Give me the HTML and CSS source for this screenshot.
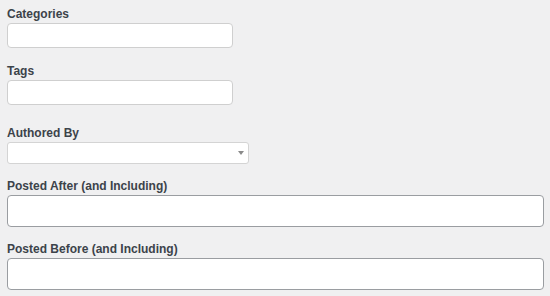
FILE: index.html
```html
<!DOCTYPE html>
<html lang="en">
<head>
    <meta charset="UTF-8">
    <meta name="viewport" content="width=device-width, initial-scale=1.0">
    <title>Post Filters</title>
    <link rel="stylesheet" href="styles.css">
</head>
<body>
    <div class="filters">
        <div class="field field-first">
            <label for="categories">Categories</label>
            <input type="text" id="categories" class="short-input">
        </div>

        <div class="field">
            <label for="tags">Tags</label>
            <input type="text" id="tags" class="short-input">
        </div>

        <div class="field field-author">
            <label for="author">Authored By</label>
            <div class="select-wrap">
                <select id="author">
                    <option value=""></option>
                </select>
                <span class="select-arrow"></span>
            </div>
        </div>

        <div class="field field-date">
            <label for="postedAfter">Posted After (and Including)</label>
            <input type="text" id="postedAfter" class="wide-input">
        </div>

        <div class="field field-date">
            <label for="postedBefore">Posted Before (and Including)</label>
            <input type="text" id="postedBefore" class="wide-input">
        </div>
    </div>
</body>
</html>
```

FILE: styles.css
```css
body {
    margin: 0;
    padding: 0 7px;
    background-color: #f0f0f1;
    font-family: "Liberation Sans", Arial, sans-serif;
    color: #3c434a;
}
.field {
    margin-top: 14px;
}
.field-first {
    margin-top: 5px;
}
.field-author {
    margin-top: 19px;
}
.field-date {
    margin-top: 13px;
}
label {
    display: block;
    font-size: 12px;
    font-weight: bold;
    line-height: 18px;
}
input[type="text"] {
    display: block;
    box-sizing: border-box;
    margin: 0;
    background-color: #fff;
    border-radius: 4px;
}
.short-input {
    width: 226px;
    height: 25px;
    border: 1px solid #cfcfcf;
}
.wide-input {
    width: 537px;
    height: 32px;
    border: 1px solid #9a9da1;
}
.select-wrap {
    position: relative;
    width: 242px;
}
select {
    display: block;
    box-sizing: border-box;
    width: 242px;
    height: 22px;
    margin: 0;
    border: 1px solid #d4d4d4;
    border-radius: 3px;
    background-color: #fff;
    appearance: none;
}
.select-arrow {
    position: absolute;
    right: 5px;
    top: 9px;
    width: 0;
    height: 0;
    border-left: 3.5px solid transparent;
    border-right: 3.5px solid transparent;
    border-top: 4px solid #8a8a8a;
}
```
